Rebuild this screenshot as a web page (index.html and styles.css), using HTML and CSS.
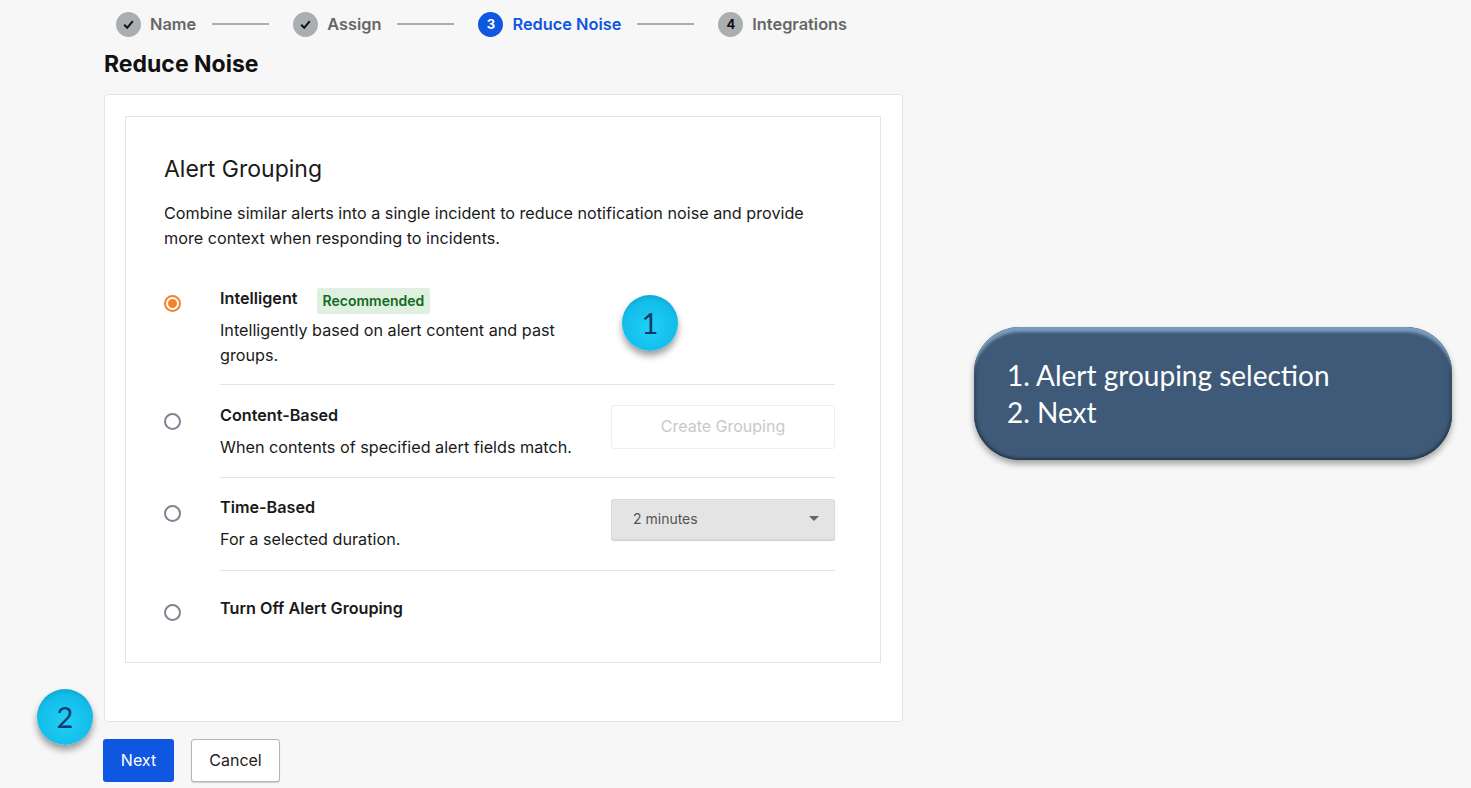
FILE: index.html
```html
<!DOCTYPE html>
<html>
<head>
    <title>Reduce Noise</title>
    <link rel="stylesheet" href="styles.css">
</head>
<body>
    <div class="stepper">
        <div class="step">
            <span class="step-icon">
                <svg width="13" height="13" viewBox="0 0 13 13"><path d="M2.2 6.8 L5.2 9.8 L10.8 3.2" fill="none" stroke="#111" stroke-width="2"/></svg>
            </span>
            <span class="step-label">Name</span>
        </div>
        <div class="step-line"></div>
        <div class="step">
            <span class="step-icon">
                <svg width="13" height="13" viewBox="0 0 13 13"><path d="M2.2 6.8 L5.2 9.8 L10.8 3.2" fill="none" stroke="#111" stroke-width="2"/></svg>
            </span>
            <span class="step-label">Assign</span>
        </div>
        <div class="step-line"></div>
        <div class="step active">
            <span class="step-icon">3</span>
            <span class="step-label">Reduce Noise</span>
        </div>
        <div class="step-line"></div>
        <div class="step">
            <span class="step-icon">4</span>
            <span class="step-label">Integrations</span>
        </div>
    </div>

    <h1 class="page-title">Reduce Noise</h1>

    <div class="card">
        <div class="inner">
            <h2 class="section-title">Alert Grouping</h2>
            <p class="section-desc">Combine similar alerts into a single incident to reduce notification noise and provide more context when responding to incidents.</p>

            <div class="option option-first">
                <span class="radio checked"></span>
                <div class="option-body">
                    <div class="option-text">
                        <div class="option-name name-with-badge">Intelligent <span class="badge">Recommended</span></div>
                        <p class="option-desc">Intelligently based on alert content and past groups.</p>
                    </div>
                </div>
            </div>

            <div class="option option-second">
                <span class="radio"></span>
                <div class="option-body">
                    <div class="option-text">
                        <div class="option-name">Content-Based</div>
                        <p class="option-desc">When contents of specified alert fields match.</p>
                    </div>
                    <div class="btn-disabled">Create Grouping</div>
                </div>
            </div>

            <div class="option option-third">
                <span class="radio"></span>
                <div class="option-body">
                    <div class="option-text">
                        <div class="option-name">Time-Based</div>
                        <p class="option-desc">For a selected duration.</p>
                    </div>
                    <div class="select-disabled">
                        <span>2 minutes</span>
                        <span class="caret"></span>
                    </div>
                </div>
            </div>

            <div class="option option-last">
                <span class="radio"></span>
                <div class="option-body">
                    <div class="option-text">
                        <div class="option-name">Turn Off Alert Grouping</div>
                    </div>
                </div>
            </div>
        </div>
    </div>

    <div class="actions">
        <div class="btn btn-primary">Next</div>
        <div class="btn btn-default">Cancel</div>
    </div>

    <!-- tutorial annotations drawn over the screenshot -->
    <div class="marker marker-one">1</div>
    <div class="marker marker-two">2</div>
    <div class="callout">1. Alert grouping selection<br>2. Next</div>
</body>
</html>
```

FILE: styles.css
```css
body {
    margin: 0;
    height: 788px;
    overflow: hidden;
    background: #f7f7f7;
    font-family: Inter, "Liberation Sans", sans-serif;
    color: #1a1a1a;
    position: relative;
}

.stepper {
    display: flex;
    align-items: center;
    height: 48px;
    padding-left: 116px;
}

.step {
    display: flex;
    align-items: center;
    gap: 9px;
}

.step-icon {
    display: flex;
    align-items: center;
    justify-content: center;
    width: 25px;
    height: 25px;
    border-radius: 50%;
    background: #a9aeb0;
    color: #111;
    font-size: 13px;
    font-weight: 700;
}

.step-label {
    font-size: 16.35px;
    font-weight: 600;
    color: #666;
}

.step.active .step-icon {
    background: #0f56e0;
    color: #fff;
}

.step.active .step-label {
    color: #0f56e0;
}

.step-line {
    width: 57px;
    height: 2px;
    margin: 0 24px 0 16px;
    background: #a9aeb0;
}

.page-title {
    margin: 0 0 0 104px;
    height: 46px;
    line-height: 33px;
    font-size: 23px;
    font-weight: 700;
    color: #111;
}

.card {
    width: 756px;
    height: 605px;
    margin-left: 104px;
    padding: 21px 21px 0 20px;
    background: #fff;
    border: 1px solid #e4e4e4;
    border-radius: 4px;
}

.inner {
    height: 545px;
    padding: 0 45px 0 38px;
    border: 1px solid #e4e4e4;
}

.section-title {
    margin: 36px 0 0;
    line-height: 32px;
    font-size: 23px;
    font-weight: 400;
}

.section-desc {
    margin: 16px 0 0;
    font-size: 16.2px;
    line-height: 25px;
}

.option {
    display: flex;
}

.radio {
    flex: none;
    width: 13px;
    height: 13px;
    margin-right: 39px;
    border: 2px solid #7d8590;
    border-radius: 50%;
    background: #fff;
}

.radio.checked {
    border-color: #f5822a;
    position: relative;
}

.radio.checked::after {
    content: "";
    position: absolute;
    left: 2px;
    top: 2px;
    width: 9px;
    height: 9px;
    border-radius: 50%;
    background: #f5822a;
}

.option-body {
    flex: 1;
    display: flex;
    justify-content: space-between;
    border-bottom: 1px solid #e4e4e4;
}

.option-text {
    width: 360px;
}

.option-name {
    font-size: 16.2px;
    font-weight: 600;
    line-height: 24px;
}

.name-with-badge {
    display: flex;
    align-items: flex-start;
    height: 24px;
    padding-top: 1px;
}

.badge {
    margin: 2px 0 0 19px;
    padding: 0 6px;
    line-height: 26px;
    font-size: 14px;
    border-radius: 3px;
    background: #dff0e0;
    color: #116a1c;
}

.option-desc {
    margin: 8px 0 0;
    font-size: 16.2px;
    line-height: 25px;
}

.option-first {
    margin-top: 34px;
}

.option-first .radio {
    margin-top: 10px;
}

.option-first .option-body {
    height: 99px;
}

.option-second .radio {
    margin-top: 28px;
}

.option-second .option-body {
    height: 93px;
    padding-top: 18px;
    box-sizing: border-box;
}

.option-third .radio {
    margin-top: 27px;
}

.option-third .option-body {
    height: 93px;
    padding-top: 17px;
    box-sizing: border-box;
}

.option-last .radio {
    margin-top: 33px;
}

.option-last .option-body {
    padding-top: 25px;
    border-bottom: 0;
}

.btn-disabled {
    box-sizing: border-box;
    width: 224px;
    height: 44px;
    margin-top: 2px;
    line-height: 40px;
    text-align: center;
    font-size: 16px;
    color: #c9c9c9;
    background: #fff;
    border: 1px solid #eeeeee;
    border-radius: 3px;
}

.select-disabled {
    box-sizing: border-box;
    display: flex;
    align-items: center;
    justify-content: space-between;
    width: 224px;
    height: 41px;
    margin-top: 4px;
    padding: 0 15px 2px 21px;
    font-size: 14px;
    color: #555;
    background: #e4e4e4;
    border: 1px solid #dadada;
    border-radius: 3px;
    box-shadow: 0 1px 1px #cfcfcf;
}

.caret {
    width: 0;
    height: 0;
    border-left: 5px solid transparent;
    border-right: 5px solid transparent;
    border-top: 5px solid #666;
}

.actions {
    display: flex;
    gap: 17px;
    margin: 17px 0 0 103px;
}

.btn {
    box-sizing: border-box;
    height: 43px;
    line-height: 43px;
    text-align: center;
    font-size: 16px;
    border-radius: 3px;
}

.btn-primary {
    width: 71px;
    background: #0f56e0;
    color: #fff;
}

.btn-default {
    width: 89px;
    line-height: 41px;
    background: #fff;
    color: #222;
    border: 1px solid #b5b5b5;
    box-shadow: 0 1px 1px #cfcfcf;
}

.marker {
    position: absolute;
    width: 56px;
    height: 56px;
    border-radius: 50%;
    text-align: center;
    line-height: 56px;
    font-family: Lato, sans-serif;
    font-size: 29px;
    color: #0e3a6e;
    background: radial-gradient(circle at 50% 58%, #22d0f6 0%, #12bdea 62%, #0f9cc6 84%, #0a5f80 100%);
    box-shadow: 0 5px 7px rgba(0, 0, 0, 0.38);
}

.marker-one {
    left: 622px;
    top: 295px;
}

.marker-two {
    left: 37px;
    top: 689px;
}

.callout {
    position: absolute;
    left: 974px;
    top: 327px;
    box-sizing: border-box;
    width: 478px;
    height: 133px;
    padding: 30px 0 0 33px;
    border-radius: 46px;
    font-family: Lato, sans-serif;
    font-size: 28px;
    line-height: 37px;
    color: #fff;
    background: #3e5a78;
    box-shadow: inset 0 6px 3px -1px #7c9cbd, inset 0 -2px 3px #26394d, inset 3px 0 4px -2px #25394e, inset -3px 0 4px -2px #25394e, 0 4px 6px rgba(0, 0, 0, 0.35);
}
```
